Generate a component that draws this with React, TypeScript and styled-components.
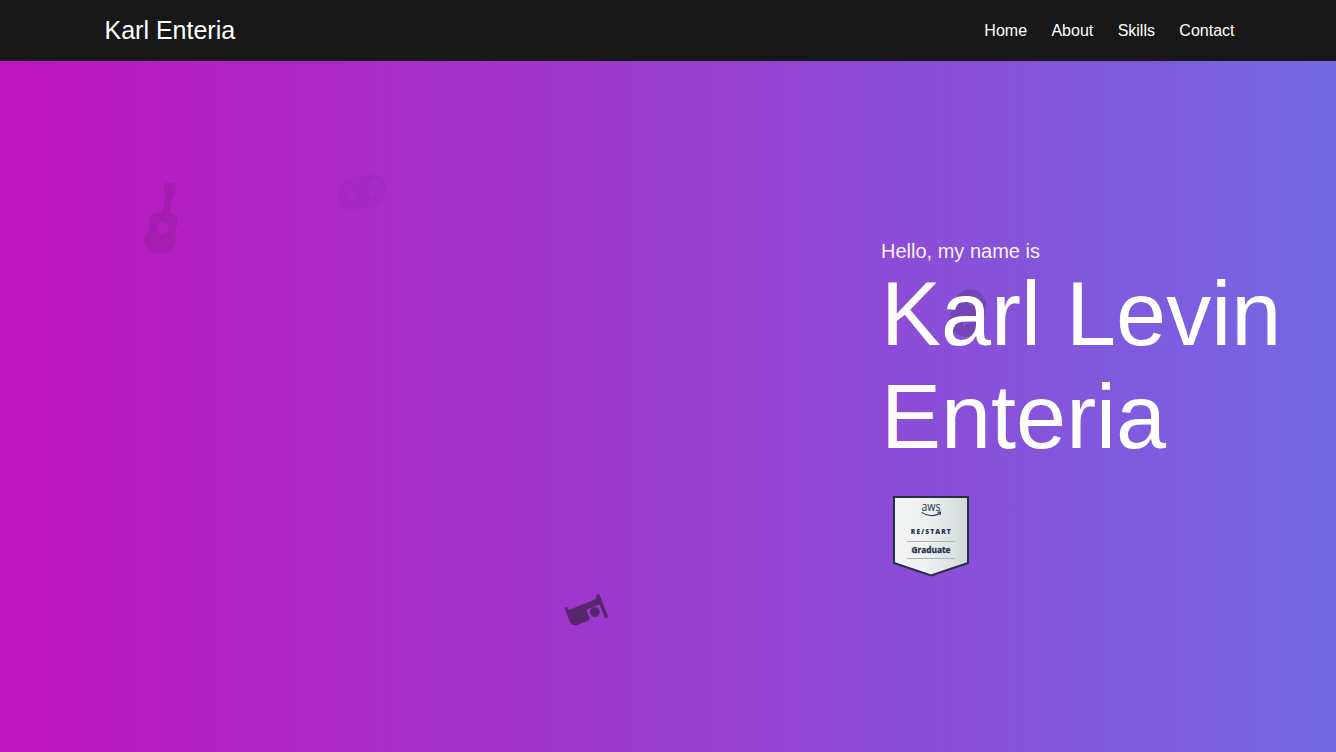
import React from "react";
import styled, { createGlobalStyle } from "styled-components";

const GlobalStyle = createGlobalStyle`
  *, *::before, *::after { box-sizing: border-box; }
  body {
    margin: 0;
    overflow: hidden;
    font-family: "Liberation Sans", Arial, sans-serif;
    color: #fff;
  }
`;

const Page = styled.div`
  display: flex;
  flex-direction: column;
  height: 100vh;
`;

const Header = styled.header`
  display: flex;
  align-items: center;
  justify-content: space-between;
  flex: none;
  height: 61px;
  padding: 0 101.5px 0 104.5px;
  background: #181818;
`;

const Brand = styled.a`
  font-size: 25px;
  line-height: 30px;
  padding-bottom: 1px;
`;

const Nav = styled.nav`
  display: flex;
  gap: 24.4px;
`;

const NavLink = styled.a`
  font-size: 16px;
  line-height: 20px;
`;

const Hero = styled.main`
  position: relative;
  flex: 1;
  display: flex;
  justify-content: flex-end;
  padding-top: 178px;
  background: linear-gradient(90deg, #be14be 0%, #9b3bd0 48%, #7468e4 100%);
`;

const Intro = styled.section`
  position: relative;
  width: 455px;
  display: flex;
  flex-direction: column;
  align-items: flex-start;
`;

const Greeting = styled.p`
  margin: 0;
  font-size: 20px;
  line-height: 24px;
  color: rgba(255, 255, 255, 0.96);
`;

const Name = styled.h1`
  margin: 0;
  font-size: 90px;
  font-weight: 400;
  line-height: 103px;
`;

const Badge = styled.svg`
  width: 78px;
  height: 83px;
  margin: 26px 0 0 11px;
`;

const Floating = styled.svg<{ $x: number; $y: number; $w: number; $h: number; $alpha: number }>`
  position: absolute;
  left: ${(p) => p.$x}px;
  top: ${(p) => p.$y}px;
  width: ${(p) => p.$w}px;
  height: ${(p) => p.$h}px;
  opacity: ${(p) => p.$alpha};
  fill: #181818;
`;

const Guitar = () => (
  <Floating $x={130} $y={109} $w={70} $h={95} $alpha={0.1} viewBox="0 0 70 95">
    <path
      fillRule="evenodd"
      d="M34.500 14.500 Q35 12.500 37 12.500 L43.500 13 Q46 13.500 45.800 16 L45 24 Q44 27 42 28 L39.500 42 C45 43.500 49 48 47.500 54 C46.500 58 43.500 60 45.500 65 C48 74 43 84 31 84.500 C20 84.500 13 77 14 69 C15 62 20.500 61 19.700 54 C19 47 23 42 32 42 L35.500 27 Q33.500 25 33.800 22 Z M32.400 52.200 A5.900 5.900 0 1 0 32.400 64 A5.900 5.900 0 1 0 32.400 52.200 Z"
    />
  </Floating>
);

const PadShape = () => (
  <path
    fillRule="evenodd"
    d="M-8 -16 H8 A16 16 0 0 1 8 16 H-8 A16 16 0 0 1 -8 -16 Z M-12.500 -5.500 V-1.500 H-16.500 V1.500 H-12.500 V5.500 H-9.500 V1.500 H-5.500 V-1.500 H-9.500 V-5.500 Z M14 -8.500 A3 3 0 1 0 14 -2.500 A3 3 0 1 0 14 -8.500 Z M9 0 A3 3 0 1 0 9 6 A3 3 0 1 0 9 0 Z"
  />
);

const Gamepad = () => (
  <Floating $x={325} $y={104} $w={75} $h={55} $alpha={0.035} viewBox="0 0 75 55">
    <g transform="translate(37 27.500) rotate(-15) scale(1.020)">
      <PadShape />
    </g>
  </Floating>
);

const SmallGamepad = () => (
  <Floating $x={940} $y={218} $w={60} $h={70} $alpha={0.18} viewBox="0 0 60 70">
    <path
      fillRule="evenodd"
      transform="translate(28 34) rotate(-72)"
      d="M-8 -16 H8 A16 16 0 0 1 8 16 H-8 A16 16 0 0 1 -8 -16 Z M-11 -3.800 V-1 H-13.800 V1 H-11 V3.800 H-9 V1 H-6.200 V-1 H-9 V-3.800 Z M9 -2 A2 2 0 1 0 9 2 A2 2 0 1 0 9 -2 Z"
    />
  </Floating>
);

const Bed = () => (
  <Floating $x={550} $y={524} $w={70} $h={50} $alpha={0.53} viewBox="0 0 70 50">
    <path d="M14.600 23.500 Q15.200 21.500 17.300 22.300 L19 25 L46.500 13.700 L45.900 11 Q47.500 8.500 49.500 9.800 L58 31.200 Q57.500 34 54.800 33 L50.500 22 L49.500 19.500 L38 24 Q36.500 24.800 37 26.500 L39.800 33.500 Q40 35 38 36 L27 40 Q22 41 19.800 36.500 Z" />
    <circle cx="44.800" cy="27" r="4.900" />
  </Floating>
);

const AwsBadge = () => (
  <Badge viewBox="0 0 78 83">
    <defs>
      <linearGradient id="badgeSilver" x1="0" y1="0" x2="1" y2="0">
        <stop offset="0" stopColor="#f2f3f3" />
        <stop offset="0.45" stopColor="#eff1f1" />
        <stop offset="1" stopColor="#d0d7d7" />
      </linearGradient>
    </defs>
    <path d="M2 2 H76 V68 L39 80.500 L2 68 Z" fill="url(#badgeSilver)" stroke="#232f45" strokeWidth="2" />
    <g fill="#263248" textAnchor="middle" fontFamily='"Open Sans", "Noto Sans", sans-serif'>
      <text x="39" y="15.800" fontSize="12" fontWeight="500" textLength="19" lengthAdjust="spacingAndGlyphs">aws</text>
      <text x="39.300" y="39.200" fontSize="6" fontWeight="800" letterSpacing="1" textLength="41" lengthAdjust="spacingAndGlyphs">RE/START</text>
      <text x="39" y="57.500" fontSize="8.800" fontWeight="700" stroke="#263248" strokeWidth="0.300" textLength="39" lengthAdjust="spacingAndGlyphs">Graduate</text>
    </g>
    <path d="M29.500 17.400 Q39 23.400 47.500 18.500 M45.500 17.200 L48.700 17 L47.800 20.200" fill="none" stroke="#263248" strokeWidth="1.100" />
    <path d="M15 46.500 H63 M15 63.500 H63" stroke="#adb3b9" strokeWidth="1" />
  </Badge>
);

const links = ["Home", "About", "Skills", "Contact"];

export default function App() {
  return (
    <Page>
      <GlobalStyle />
      <Header>
        <Brand>Karl Enteria</Brand>
        <Nav>
          {links.map((label) => (
            <NavLink key={label}>{label}</NavLink>
          ))}
        </Nav>
      </Header>
      <Hero>
        <Guitar />
        <Gamepad />
        <SmallGamepad />
        <Bed />
        <Intro>
          <Greeting>Hello, my name is</Greeting>
          <Name>Karl Levin Enteria</Name>
          <AwsBadge />
        </Intro>
      </Hero>
    </Page>
  );
}
